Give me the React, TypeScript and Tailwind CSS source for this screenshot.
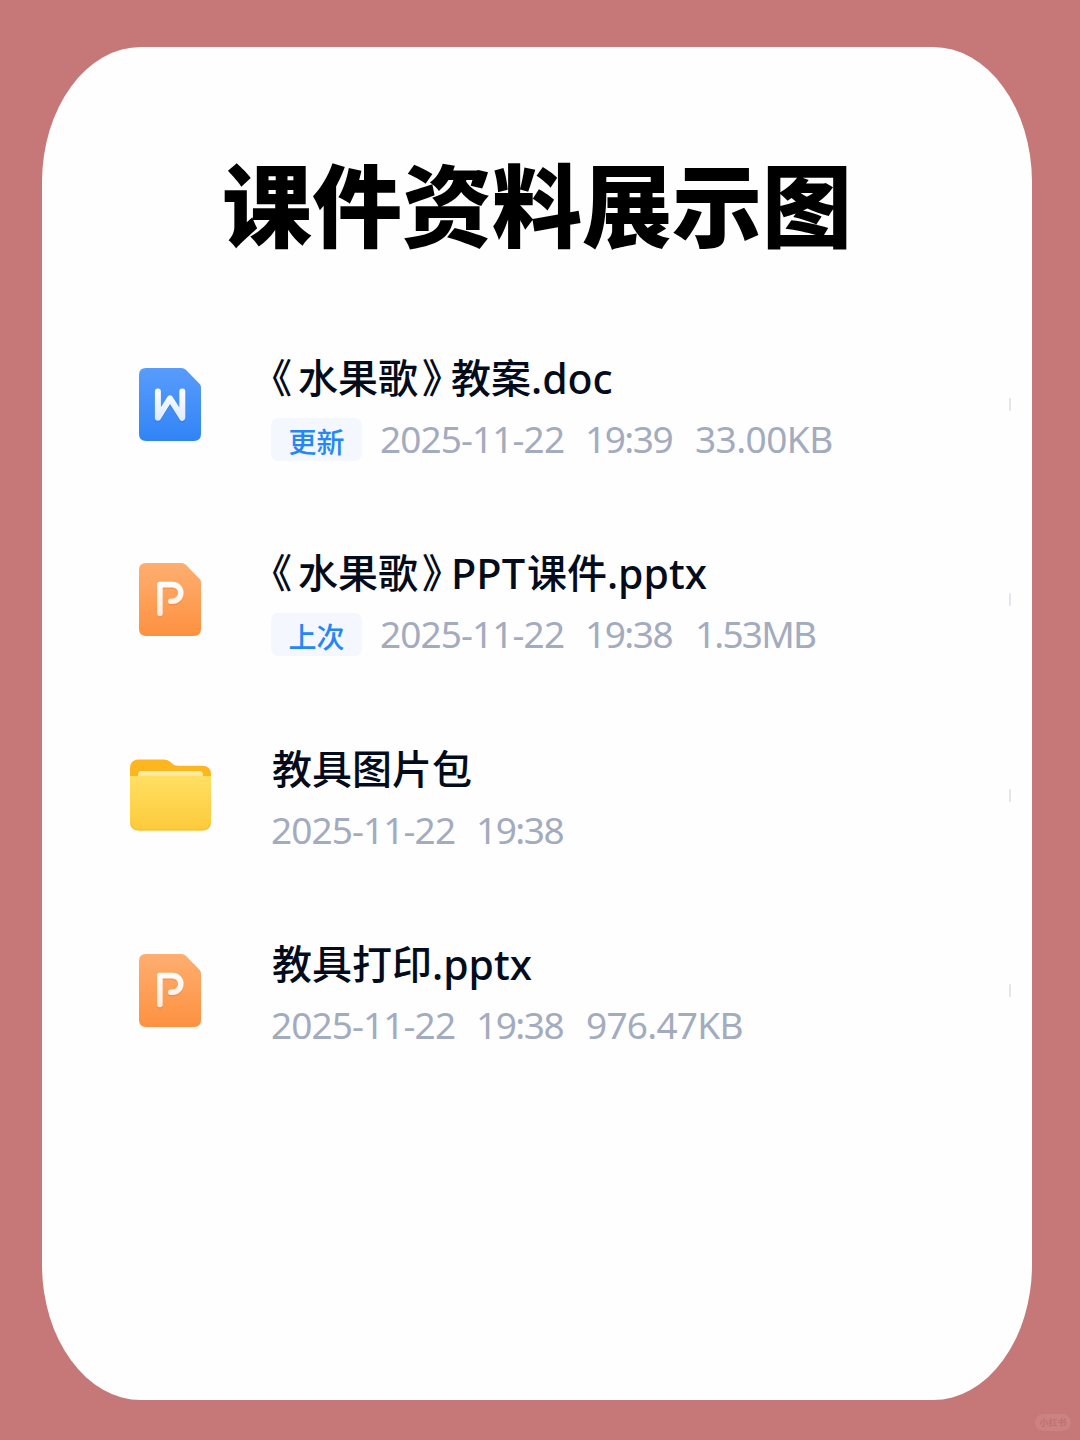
import React from 'react';

type FileKind = 'doc' | 'ppt' | 'folder';

interface NamePart {
  text: string;
  className: string;
}

interface FileItem {
  id: string;
  kind: FileKind;
  name: NamePart[];
  tag?: string;
  date: string;
  time: string;
  size?: string;
  sizeClass?: string;
}

// half-width book title marks
const OPEN_MARK = "mr-[6px] [font-feature-settings:'halt']";
const CLOSE_MARK = "ml-[4px] mr-[9px] [font-feature-settings:'halt']";

const FILES: FileItem[] = [
  {
    id: 'plan',
    kind: 'doc',
    name: [
      { text: '《', className: OPEN_MARK },
      { text: '水果歌', className: '' },
      { text: '》', className: CLOSE_MARK },
      { text: '教案', className: '' },
      { text: '.doc', className: 'text-[41px]' },
    ],
    tag: '更新',
    date: '2025-11-22',
    time: '19:39',
    size: '33.00KB',
    sizeClass: 'tracking-[-0.55px]',
  },
  {
    id: 'slides',
    kind: 'ppt',
    name: [
      { text: '《', className: OPEN_MARK },
      { text: '水果歌', className: '' },
      { text: '》', className: CLOSE_MARK },
      { text: 'PPT', className: 'mr-[2px] text-[41.5px]' },
      { text: '课件', className: '' },
      { text: '.pptx', className: 'text-[41px]' },
    ],
    tag: '上次',
    date: '2025-11-22',
    time: '19:38',
    size: '1.53MB',
    sizeClass: 'tracking-[-1.8px]',
  },
  {
    id: 'pictures',
    kind: 'folder',
    name: [{ text: '教具图片包', className: '' }],
    date: '2025-11-22',
    time: '19:38',
  },
  {
    id: 'print',
    kind: 'ppt',
    name: [
      { text: '教具打印', className: '' },
      { text: '.pptx', className: 'text-[41px]' },
    ],
    date: '2025-11-22',
    time: '19:38',
    size: '976.47KB',
    sizeClass: 'tracking-[-0.75px]',
  },
];

const SHEET_PATH = 'M7 0H42.5Q45 0 46.8 1.8L60.3 15.5Q62 17.2 62 19.6V66Q62 73 55 73H7Q0 73 0 66V7Q0 0 7 0Z';

const DocIcon = () => (
  <svg className="w-[62px] h-[73px]" viewBox="0 0 62 73" fill="none">
    <defs>
      <linearGradient id="docFill" x1="0" y1="0" x2="0" y2="1">
        <stop offset="0" stopColor="#589cfb" />
        <stop offset="1" stopColor="#3184f7" />
      </linearGradient>
      <linearGradient id="docMark" x1="0" y1="20" x2="0" y2="54" gradientUnits="userSpaceOnUse">
        <stop offset="0" stopColor="#ffffff" />
        <stop offset="1" stopColor="#dceafe" />
      </linearGradient>
    </defs>
    <path d={SHEET_PATH} fill="url(#docFill)" />
    <path d="M18.9 24V49.8L31 30.3L43.3 49.8V24" stroke="#2268d8" strokeOpacity="0.35" strokeWidth="6" strokeLinecap="round" strokeLinejoin="round" transform="translate(0 1.5)" />
    <path d="M18.9 23.5V49.8L31 30.3L43.3 49.8V23.5" stroke="url(#docMark)" strokeWidth="6" strokeLinecap="round" strokeLinejoin="round" />
  </svg>
);

const PptIcon = () => (
  <svg className="w-[62px] h-[73px]" viewBox="0 0 62 73" fill="none">
    <defs>
      <linearGradient id="pptFill" x1="0" y1="0" x2="0" y2="1">
        <stop offset="0" stopColor="#feae70" />
        <stop offset="1" stopColor="#fd9140" />
      </linearGradient>
      <linearGradient id="pptMark" x1="0" y1="18" x2="0" y2="54" gradientUnits="userSpaceOnUse">
        <stop offset="0" stopColor="#ffffff" />
        <stop offset="1" stopColor="#ffe9d8" />
      </linearGradient>
    </defs>
    <path d={SHEET_PATH} fill="url(#pptFill)" />
    <path d="M20.9 50.5V21.6H33.5A8.3 8.3 0 0 1 33.5 38.2H31.8" stroke="#e0701e" strokeOpacity="0.3" strokeWidth="5.6" strokeLinecap="round" strokeLinejoin="round" transform="translate(0 1.5)" />
    <path d="M20.9 50.5V21.6H33.5A8.3 8.3 0 0 1 33.5 38.2H31.8" stroke="url(#pptMark)" strokeWidth="5.6" strokeLinecap="round" strokeLinejoin="round" />
  </svg>
);

const FolderIcon = () => (
  <svg className="w-[81px] h-[72px]" viewBox="0 0 81 72" fill="none">
    <defs>
      <linearGradient id="folderFront" x1="0" y1="0" x2="0" y2="1">
        <stop offset="0" stopColor="#ffdf63" />
        <stop offset="1" stopColor="#fdca3b" />
      </linearGradient>
      <linearGradient id="folderPaper" x1="0" y1="11" x2="0" y2="18" gradientUnits="userSpaceOnUse">
        <stop offset="0" stopColor="#fff3c8" />
        <stop offset="1" stopColor="#ffe27c" />
      </linearGradient>
    </defs>
    <path d="M9 0.5H34Q38 0.5 40.5 3L42.3 4.8Q44.5 6.8 48 6.8H72Q81 6.8 81 15.5V30H0V9.5Q0 0.5 9 0.5Z" fill="#fdb61d" />
    <path d="M8 20V16Q8 12 12 12H69Q73 12 73 16V20Z" fill="url(#folderPaper)" />
    <path d="M0 17H81V63Q81 71.5 72.5 71.5H8.5Q0 71.5 0 63Z" fill="url(#folderFront)" />
    <path d="M1 64Q2 70.8 8.5 70.8H72.5Q79 70.8 80 64" stroke="#fbbb28" strokeOpacity="0.7" strokeWidth="1.4" />
  </svg>
);

const ICONS: Record<FileKind, React.FC> = {
  doc: DocIcon,
  ppt: PptIcon,
  folder: FolderIcon,
};

const FileRow: React.FC<{ item: FileItem }> = ({ item }) => {
  const Icon = ICONS[item.kind];

  return (
    <li className="flex h-[195.3px] items-start">
      <div className="ml-[87px] flex h-[113px] w-[82px] shrink-0 items-center justify-center">
        <Icon />
      </div>
      <div className="ml-[60px] grow">
        <div className="flex h-[60px] items-center pl-px whitespace-nowrap font-['Noto_Sans','Noto_Sans_CJK_SC',sans-serif] text-[40px] leading-[60px] font-medium text-[#040c1c]">
          {item.name.map((part) => (
            <span key={part.text} className={part.className}>{part.text}</span>
          ))}
        </div>
        <div className="mt-[10px] flex h-[43px] items-center whitespace-nowrap font-['Noto_Sans','Noto_Sans_CJK_SC',sans-serif] text-[37px] leading-[41px] text-[#a3abbe]">
          {item.tag && (
            <span className="mr-[18px] flex h-[43px] w-[91px] shrink-0 items-center justify-center rounded-[7px] bg-[#f4f7fd] pt-[5px] text-[28px] font-medium text-[#2387f8]">
              {item.tag}
            </span>
          )}
          <div className="flex pb-[2px]">
            <span className="w-[205px] tracking-[-0.9px]">{item.date}</span>
            <span className="w-[110px] tracking-[-1.5px]">{item.time}</span>
            {item.size && <span className={item.sizeClass}>{item.size}</span>}
          </div>
        </div>
      </div>
      <div className="mt-[50px] mr-[21px] h-[13px] w-[2px] rounded-full bg-[#e3e5ea]" />
    </li>
  );
};

export default function App() {
  return (
    <main className="relative h-[1440px] w-[1080px] overflow-hidden bg-[#c57877] pt-[47px] pl-[42px]">
      <section className="h-[1353px] w-[990px] rounded-[10%] bg-[#fefefe]">
        <h1 className="pt-[89px] text-center font-['Noto_Sans_CJK_SC',sans-serif] text-[90px] leading-[130px] font-black text-black">
          课件资料展示图
        </h1>
        <ul className="mt-[82px]">
          {FILES.map((item) => (
            <FileRow key={item.id} item={item} />
          ))}
        </ul>
      </section>
      <div className="absolute right-[9px] bottom-[9px] flex h-[17px] w-[36px] items-center justify-center rounded-full bg-[#cc8281] font-['Noto_Sans_CJK_SC',sans-serif] text-[9px] leading-none font-bold text-[#c07170]">
        小红书
      </div>
    </main>
  );
}
